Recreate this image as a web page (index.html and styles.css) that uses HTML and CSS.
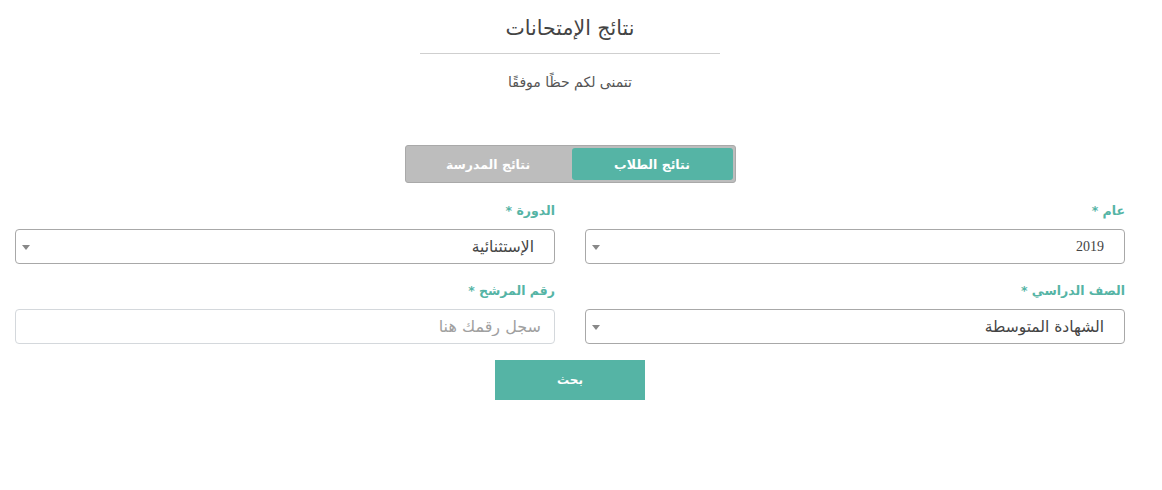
FILE: index.html
```html
<!DOCTYPE html>
<html lang="ar" dir="rtl">
<head>
<meta charset="utf-8">
<title>نتائج الإمتحانات</title>
<link rel="stylesheet" href="styles.css">
</head>
<body>
<div class="page">
  <header class="head">
    <h1 class="title">نتائج الإمتحانات</h1>
    <div class="rule"></div>
    <p class="subtitle">تتمنى لكم حظًا موفقًا</p>
  </header>

  <div class="tabs-wrap">
    <div class="tabs">
      <button class="tab active" type="button">نتائج الطلاب</button>
      <button class="tab" type="button">نتائج المدرسة</button>
    </div>
  </div>

  <form class="form">
    <div class="grid">
      <div class="group">
        <label class="label">عام *</label>
        <div class="select-wrap">
          <select class="control select num">
            <option>2019</option>
          </select>
        </div>
      </div>
      <div class="group">
        <label class="label">الدورة *</label>
        <div class="select-wrap">
          <select class="control select">
            <option>الإستثنائية</option>
          </select>
        </div>
      </div>
      <div class="group">
        <label class="label">الصف الدراسي *</label>
        <div class="select-wrap">
          <select class="control select">
            <option>الشهادة المتوسطة</option>
          </select>
        </div>
      </div>
      <div class="group">
        <label class="label">رقم المرشح *</label>
        <input class="control input" type="text" placeholder="سجل رقمك هنا">
      </div>
    </div>
    <div class="actions">
      <button class="submit" type="button">بحث</button>
    </div>
  </form>
</div>
</body>
</html>
```

FILE: styles.css
```css
* { box-sizing: border-box; }

html, body {
  margin: 0;
  padding: 0;
  background: #fff;
}

body {
  font-family: "DejaVu Sans", sans-serif;
  color: #444;
}

.page {
  margin-left: 15px;
  margin-right: 37px;
}

.head {
  display: flex;
  flex-direction: column;
  align-items: center;
  padding-top: 14px;
}

.title {
  margin: 0;
  font-size: 20.5px;
  font-weight: normal;
  line-height: 28px;
  color: #444;
}

.rule {
  width: 300px;
  height: 1px;
  background: #cfcfcf;
  margin-top: 11px;
}

.subtitle {
  margin: 18px 0 0;
  font-size: 14px;
  line-height: 20px;
  color: #555;
}

.tabs-wrap {
  display: flex;
  justify-content: center;
  margin-top: 53px;
}

.tabs {
  display: flex;
  gap: 3px;
  width: 331px;
  height: 38px;
  padding: 2px;
  background: #bdbdbd;
  border: 1px solid #a9a9a9;
  border-radius: 3px;
}

.tab {
  flex: 1;
  border: 0;
  border-radius: 3px;
  background: transparent;
  color: #fff;
  font-family: "DejaVu Sans", sans-serif;
  font-size: 12.5px;
  font-weight: bold;
  padding: 0;
}

.tab.active {
  background: #55b4a5;
}

.form {
  margin-top: 18px;
}

.grid {
  display: grid;
  grid-template-columns: 1fr 1fr;
  column-gap: 30px;
  row-gap: 17px;
}

.group {
  display: flex;
  flex-direction: column;
}

.label {
  font-size: 12.5px;
  font-weight: bold;
  line-height: 20px;
  color: #55b4a5;
  margin-bottom: 8px;
}

.select-wrap {
  position: relative;
}

.select-wrap::after {
  content: "";
  position: absolute;
  left: 7px;
  top: 16px;
  border-left: 4px solid transparent;
  border-right: 4px solid transparent;
  border-top: 5px solid #888;
  pointer-events: none;
}

.control {
  display: block;
  width: 100%;
  height: 35px;
  border-radius: 4px;
  background: #fff;
  color: #444;
  outline: none;
}

.select {
  appearance: none;
  -webkit-appearance: none;
  border: 1px solid #a8a8a8;
  padding: 0 20px 0 30px;
  font-family: "DejaVu Sans", sans-serif;
  font-size: 15.5px;
}

.select.num {
  font-family: "Liberation Serif", serif;
  font-size: 14px;
}

.input {
  border: 1px solid #d4d8dc;
  padding: 0 13px;
  font-family: "DejaVu Sans", sans-serif;
  font-size: 16px;
}

.input::placeholder {
  color: #a0a0a0;
}

.actions {
  display: flex;
  justify-content: center;
  margin-top: 16px;
}

.submit {
  width: 150px;
  height: 40px;
  border: 0;
  background: #55b4a5;
  color: #fff;
  font-family: "DejaVu Sans", sans-serif;
  font-size: 12px;
  font-weight: bold;
}
```
